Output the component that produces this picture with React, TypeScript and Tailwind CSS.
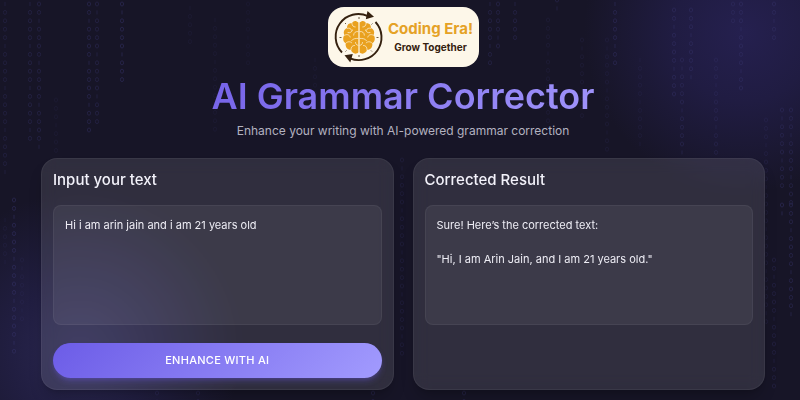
import { useState } from "react";

// Columns of falling digits: [x, first y, number of digits, opacity]
const RAIN: [number, number, number, number][] = [
  [5, 4, 21, 0.5], [30, 4, 17, 0.6], [39, 4, 18, 0.6], [56, 100, 7, 0.25],
  [89, 4, 16, 0.7], [97, 4, 15, 0.6], [122, 4, 10, 0.8], [190, 8, 5, 0.25],
  [215, 20, 14, 0.25], [248, 4, 8, 0.2], [315, 60, 5, 0.25],
  [490, 4, 8, 0.6], [498, 4, 6, 0.6], [515, 4, 5, 0.6], [548, 20, 15, 0.3],
  [557, 0, 2, 0.6], [582, 40, 10, 0.3], [607, 40, 14, 0.3], [615, 4, 8, 0.7],
  [640, 60, 11, 0.3], [674, 10, 11, 0.7], [682, 60, 12, 0.6], [691, 10, 9, 0.7],
  [716, 60, 12, 0.5], [733, 4, 3, 0.6], [741, 4, 11, 0.7], [766, 120, 25, 0.4],
  [774, 4, 5, 0.7], [782, 110, 10, 0.6], [791, 110, 12, 0.6],
  [14, 200, 19, 0.8], [5, 220, 6, 0.3], [22, 260, 8, 0.3],
  [782, 205, 2, 0.8], [791, 205, 14, 0.7], [774, 260, 16, 0.5],
  [402, 160, 24, 0.4], [157, 393, 2, 0.6], [198, 393, 2, 0.5], [373, 393, 2, 0.6], [464, 393, 2, 0.6],
];

function Rain() {
  return (
    <svg
      aria-hidden="true"
      className="pointer-events-none absolute inset-0 h-full w-full"
      viewBox="0 0 800 400"
      preserveAspectRatio="xMidYMin slice"
      fill="none"
      stroke="#37346c"
    >
      {RAIN.map(([x, y, count, opacity]) => (
        <g key={`${x}-${y}`} opacity={opacity * 0.6}>
          {Array.from({ length: count }, (_, i) =>
            (x + i * 3) % 5 === 0 ? (
              <path key={i} d={`M${x} ${y + i * 8.4 - 2}v4`} />
            ) : (
              <ellipse key={i} cx={x} cy={y + i * 8.4} rx="1.6" ry="2" />
            ),
          )}
        </g>
      ))}
    </svg>
  );
}

function BrainMark() {
  return (
    <svg aria-hidden="true" className="size-12 shrink-0 overflow-visible" viewBox="0 0 48 48" fill="none">
      <g stroke="#35210f" strokeWidth="1.9">
        <path d="M7 39.500A22.700 22.700 0 0 1 33 3.200" />
        <path d="M40.500 9A22.700 22.700 0 0 1 15 45.300" />
      </g>
      <path d="M32.500 -2 39 3.700 30.800 6.200Z" fill="#35210f" />
      <path d="M9.500 42.300 17.800 41 15.300 49.500Z" fill="#35210f" />
      <path
        d="M24 4v2M24 42v2M4.500 24.500h2M41.500 24.500h2M10 10l1 1M37.500 10.500l-1 1M10.500 38.500l1-1M37 38.500l-1-1"
        stroke="#5b4a34"
        strokeWidth=".9"
      />
      <g transform="translate(0 -1.600) scale(1 1.060)">
        <path
          d="M23.400 10.500C20.800 7.800 17.600 9 17 11.200 13.900 10.500 11.600 13 12.200 15.600 9 16.600 8 20 9.500 22.200 7.300 24.600 8 28.700 10.700 30 10 33.600 12.800 36.600 16 36.200 17 39.900 21.300 41 23.400 38.500Z"
          fill="#e9a11f"
        />
        <path
          d="M24.600 10.500C27.200 7.800 30.400 9 31 11.200 34.100 10.500 36.400 13 35.800 15.600 39 16.600 40 20 38.500 22.200 40.700 24.600 40 28.700 37.300 30 38 33.600 35.200 36.600 32 36.200 31 39.900 26.700 41 24.600 38.500Z"
          fill="#e9a11f"
        />
        <g stroke="#fdf3da" strokeWidth=".7" strokeLinecap="round">
          <path d="M17 11.500c0 2 1.300 3.200 3.200 3.200M12.500 16c1.500-.6 3.500 0 4.200 1.800M9.700 22.500c2.300-1.500 5-.3 5.500 1.700M23 19c-2.600-.3-4.300 1.200-4.400 3.400M23 25.500c-2.500 0-5.200 0-6.500 2.200M10.800 30c1.600-1.700 4.400-2 6-.3M16 36c-.2-2.300 1.300-3.900 3.500-3.900M23 32c-1.700-.3-2.500-1.400-2.500-2.700M13 20c2.200.5 4-.5 4.500-2.500" />
          <path d="M31 11.500c0 2-1.300 3.200-3.200 3.200M35.500 16c-1.500-.6-3.500 0-4.200 1.800M38.300 22.500c-2.300-1.500-5-.3-5.500 1.700M25 19c2.600-.3 4.300 1.200 4.400 3.400M25 25.500c2.500 0 5.200 0 6.500 2.200M37.200 30c-1.600-1.700-4.400-2-6-.3M32 36c.2-2.300-1.300-3.900-3.500-3.900M25 32c1.700-.3 2.500-1.400 2.500-2.700M35 20c-2.200.5-4-.5-4.500-2.500" />
        </g>
      </g>
    </svg>
  );
}

const panel =
  "rounded-2xl border border-white/5 bg-white/11 px-[11px] pt-3 pb-[11px] shadow-lg shadow-black/20 backdrop-blur-sm";
const field =
  "block h-[120px] w-full rounded-lg border border-white/5 bg-white/6 px-[11px] py-[11px] text-[11px] leading-[17px] text-[#eeedf5]";

export default function App() {
  const [text, setText] = useState("Hi i am arin jain and i am 21 years old");

  return (
    <div className="relative min-h-screen overflow-hidden bg-[#171527] bg-[radial-gradient(circle_at_93%_8%,#25204f_0px,#201c42_70px,transparent_160px),radial-gradient(circle_at_10%_88%,#2b2852_0px,#211e41_70px,transparent_160px)] font-['Inter','Open_Sans',sans-serif]">
      <Rain />
      <div className="relative pt-[7px] pr-[35px] pb-[10px] pl-[41px]">
        <header className="flex flex-col items-center text-center">
          <div className="flex h-[60px] w-[151px] items-center rounded-2xl bg-[#fdf7e9] pl-[7px]">
            <BrainMark />
            <div className="flex flex-1 flex-col items-center whitespace-nowrap">
              <span className="text-[15px] leading-5 font-bold text-[#e5a226]">Coding Era!</span>
              <span className="text-[10px] leading-4 font-bold text-[#35210f]">Grow Together</span>
            </div>
          </div>
          <h1 className="mt-[6px] bg-linear-[135deg] from-[#7562e8] to-[#a195fb] bg-clip-text text-4xl leading-[46px] font-semibold text-transparent">
            AI Grammar Corrector
          </h1>
          <p className="mt-[3px] text-xs leading-[17px] text-[#b3b2c0]">
            Enhance your writing with AI-powered grammar correction
          </p>
        </header>

        <main className="mt-[19px] grid grid-cols-2 gap-[19px]">
          <section className={panel}>
            <label htmlFor="source" className="block text-[15px] leading-[18px] font-medium text-[#f3f2fa]">
              Input your text
            </label>
            <textarea
              id="source"
              value={text}
              onChange={(event) => setText(event.target.value)}
              className={`${field} mt-4 resize-none outline-none`}
            />
            <button
              type="button"
              className="mt-[18px] block h-[35px] w-full rounded-full bg-linear-[135deg] from-[#6c5ce7] to-[#a29bfe] text-[11px] font-medium tracking-wide text-white uppercase shadow-md shadow-[#6c5ce7]/30"
            >
              Enhance with AI
            </button>
          </section>

          <section className={panel} aria-labelledby="result-title">
            <h2 id="result-title" className="text-[15px] leading-[18px] font-medium text-[#f3f2fa]">
              Corrected Result
            </h2>
            <output htmlFor="source" aria-labelledby="result-title" className={`${field} mt-4 whitespace-pre-wrap`}>
              {'Sure! Here’s the corrected text:\n\n"Hi, I am Arin Jain, and I am 21 years old."'}
            </output>
          </section>
        </main>
      </div>
    </div>
  );
}
